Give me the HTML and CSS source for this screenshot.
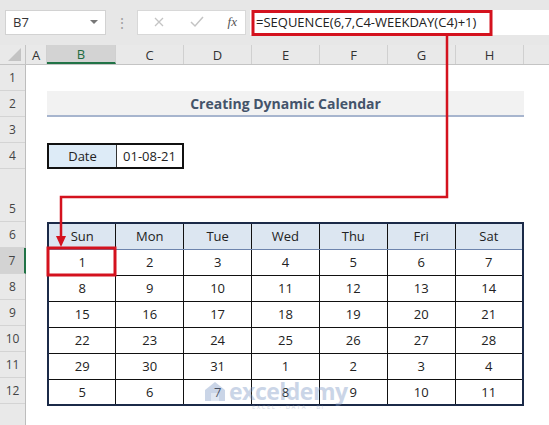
FILE: index.html
```html
<!DOCTYPE html>
<html>
<head>
    <title>Creating Dynamic Calendar</title>
    <link rel="stylesheet" href="styles.css">
</head>
<body>
    <div class="toolbar">
        <div class="name-box">
            <span>B7</span>
            <span class="name-box-arrow"></span>
        </div>
        <div class="toolbar-dots">&#8942;</div>
        <div class="fx-box">
            <svg class="fx-icon" width="14" height="14" viewBox="0 0 14 14">
                <path d="M3 3 L11 11 M11 3 L3 11" stroke="#c4c4c4" stroke-width="1.3" fill="none"/>
            </svg>
            <svg class="fx-icon" width="16" height="14" viewBox="0 0 16 14">
                <path d="M2 7 L6 11 L14 2" stroke="#c4c4c4" stroke-width="1.5" fill="none"/>
            </svg>
            <span class="fx-label">fx</span>
        </div>
        <div class="formula-input">=SEQUENCE(6,7,C4-WEEKDAY(C4)+1)</div>
    </div>

    <div class="sheet">
        <div class="col-heads">
            <div class="corner"><span class="corner-tri"></span></div>
            <div class="ch ch-a">A</div>
            <div class="ch ch-b selected">B</div>
            <div class="ch">C</div>
            <div class="ch">D</div>
            <div class="ch">E</div>
            <div class="ch">F</div>
            <div class="ch">G</div>
            <div class="ch">H</div>
            <div class="ch ch-rest"></div>
        </div>

        <div class="sheet-body">
            <div class="row-heads">
                <div class="rh">1</div>
                <div class="rh">2</div>
                <div class="rh">3</div>
                <div class="rh">4</div>
                <div class="rh rh-tall">5</div>
                <div class="rh">6</div>
                <div class="rh selected">7</div>
                <div class="rh">8</div>
                <div class="rh">9</div>
                <div class="rh">10</div>
                <div class="rh">11</div>
                <div class="rh">12</div>
                <div class="rh rh-rest"></div>
            </div>

            <div class="cells">
                <div class="title">Creating Dynamic Calendar</div>

                <div class="date-box">
                    <div class="date-label">Date</div>
                    <div class="date-value">01-08-21</div>
                </div>

                <table class="calendar">
                    <tr class="cal-head">
                        <th>Sun</th><th>Mon</th><th>Tue</th><th>Wed</th><th>Thu</th><th>Fri</th><th>Sat</th>
                    </tr>
                    <tr><td>1</td><td>2</td><td>3</td><td>4</td><td>5</td><td>6</td><td>7</td></tr>
                    <tr><td>8</td><td>9</td><td>10</td><td>11</td><td>12</td><td>13</td><td>14</td></tr>
                    <tr><td>15</td><td>16</td><td>17</td><td>18</td><td>19</td><td>20</td><td>21</td></tr>
                    <tr><td>22</td><td>23</td><td>24</td><td>25</td><td>26</td><td>27</td><td>28</td></tr>
                    <tr><td>29</td><td>30</td><td>31</td><td>1</td><td>2</td><td>3</td><td>4</td></tr>
                    <tr><td>5</td><td>6</td><td>7</td><td>8</td><td>9</td><td>10</td><td>11</td></tr>
                </table>
            </div>
        </div>
    </div>

    <!-- annotation arrows drawn on top of the sheet -->
    <svg class="annotations" width="549" height="425" viewBox="0 0 549 425">
        <rect x="253" y="11.5" width="238" height="23" fill="none" stroke="#d4121e" stroke-width="3"/>
        <polyline points="447,35 447,197 61,197 61,238" fill="none" stroke="#d4121e" stroke-width="2.5"/>
        <polygon points="56,236 66,236 61,247" fill="#d4121e"/>
        <rect x="48" y="248" width="67" height="27" fill="none" stroke="#d4121e" stroke-width="3"/>
    </svg>

    <div class="watermark">
        <svg width="22" height="24" viewBox="0 0 22 24">
            <path d="M1 11 L11 3 L21 11 L21 22 L1 22 Z" fill="#7d98c4"/>
            <path d="M7 22 L7 14 L15 14 L15 22" fill="#b6c6df"/>
        </svg>
        <div class="watermark-text">
            <span class="watermark-name">exceldemy</span>
            <span class="watermark-sub">EXCEL · DATA · BI</span>
        </div>
    </div>
</body>
</html>
```

FILE: styles.css
```css
* {
    box-sizing: border-box;
}

body {
    margin: 0;
    padding: 0;
    width: 549px;
    height: 425px;
    overflow: hidden;
    font-family: "Open Sans", Arial, sans-serif;
    color: #222;
    background-color: #fff;
    position: relative;
}

.toolbar {
    height: 45px;
    background-color: #e7e7e7;
    display: flex;
    align-items: center;
    padding-left: 5px;
    padding-bottom: 1px;
}

.name-box {
    width: 101px;
    height: 25px;
    background-color: #fff;
    border: 1px solid #d2d2d2;
    display: flex;
    align-items: center;
    justify-content: space-between;
    padding: 0 7px 0 7px;
    font-size: 13px;
    color: #333;
}

.name-box-arrow {
    width: 0;
    height: 0;
    border-left: 4px solid transparent;
    border-right: 4px solid transparent;
    border-top: 4px solid #777;
}

.toolbar-dots {
    width: 31px;
    text-align: center;
    color: #a0a0a0;
    font-size: 14px;
}

.fx-box {
    width: 109px;
    height: 25px;
    background-color: #fff;
    border: 1px solid #d8d8d8;
    display: flex;
    align-items: center;
    justify-content: space-between;
    padding: 0 8px 0 14px;
}

.fx-label {
    font-family: "Liberation Serif", serif;
    font-style: italic;
    font-size: 13px;
    color: #555;
}

.formula-input {
    flex: 1;
    height: 25px;
    margin-left: 4px;
    background-color: #fff;
    display: flex;
    align-items: center;
    padding-left: 6px;
    font-size: 13px;
    color: #222;
}

.sheet {
    height: 380px;
    display: flex;
    flex-direction: column;
}

.col-heads {
    height: 20px;
    display: flex;
    background-color: #e9e9e9;
    border-bottom: 1px solid #c4c4c4;
}

.corner {
    width: 26px;
    border-right: 1px solid #c4c4c4;
    position: relative;
}

.corner-tri {
    position: absolute;
    right: 4px;
    bottom: 3px;
    width: 0;
    height: 0;
    border-left: 13px solid transparent;
    border-bottom: 13px solid #c3c3c3;
}

.ch {
    width: 68px;
    border-right: 1px solid #d0d0d0;
    display: flex;
    align-items: center;
    justify-content: center;
    font-size: 13px;
    color: #333;
}

.ch-a {
    width: 21px;
}

.ch-b {
    width: 69px;
}

.ch.selected {
    background-color: #d3d3d3;
    color: #1e6b41;
    border-bottom: 2px solid #217346;
}

.ch-rest {
    flex: 1;
    border-right: none;
}

.sheet-body {
    flex: 1;
    display: flex;
}

.row-heads {
    width: 26px;
    display: flex;
    flex-direction: column;
    background-color: #e9e9e9;
    border-right: 1px solid #bdbdbd;
}

.rh {
    height: 26px;
    border-bottom: 1px solid #d4d4d4;
    display: flex;
    align-items: center;
    justify-content: center;
    font-size: 12px;
    color: #444;
}

.rh-tall {
    height: 53px;
    align-items: flex-end;
    padding-bottom: 4px;
}

.rh.selected {
    background-color: #d3d3d3;
    border-right: 2px solid #217346;
    margin-right: -1px;
}

.rh-rest {
    flex: 1;
    border-bottom: none;
}

.cells {
    flex: 1;
    display: grid;
    grid-template-columns: 21px 69px repeat(6, 68px) 1fr;
    grid-template-rows: 26px 26px 26px 26px 53px repeat(7, 26px) 1fr;
}

.title {
    grid-column: 2 / 9;
    grid-row: 2;
    background-color: #f2f2f2;
    border-bottom: 2px solid #a7b5ce;
    display: flex;
    align-items: center;
    justify-content: center;
    font-weight: bold;
    font-size: 14px;
    color: #44546a;
}

.date-box {
    grid-column: 2 / 4;
    grid-row: 4;
    display: flex;
    border: 2px solid #111;
    font-size: 13px;
}

.date-label {
    width: 68px;
    background-color: #ddebf7;
    border-right: 1px solid #333;
    display: flex;
    align-items: center;
    justify-content: center;
}

.date-value {
    flex: 1;
    display: flex;
    align-items: center;
    justify-content: center;
}

.calendar {
    grid-column: 2 / 9;
    grid-row: 6 / 13;
    border-collapse: collapse;
    table-layout: fixed;
    width: 477px;
    height: 182px;
    border: 2px solid #1b2a48;
    font-size: 13px;
}

.calendar th,
.calendar td {
    border: 1px solid #111;
    text-align: center;
    padding: 0;
    height: 26px;
}

.calendar th {
    font-weight: normal;
    background-color: #dce6f1;
    border-bottom-color: #6d84ad;
}

.annotations {
    position: absolute;
    top: 0;
    left: 0;
    pointer-events: none;
}

.watermark {
    position: absolute;
    left: 204px;
    top: 379px;
    display: flex;
    align-items: flex-start;
    gap: 3px;
    opacity: 0.4;
    pointer-events: none;
}

.watermark-text {
    display: flex;
    flex-direction: column;
    align-items: center;
}

.watermark-name {
    font-family: "Open Sans", sans-serif;
    font-weight: bold;
    font-size: 23px;
    letter-spacing: -0.5px;
    line-height: 24px;
    color: #7d98c4;
}

.watermark-sub {
    font-size: 6px;
    letter-spacing: 1.5px;
    line-height: 8px;
    color: #8a9ab5;
}
```
